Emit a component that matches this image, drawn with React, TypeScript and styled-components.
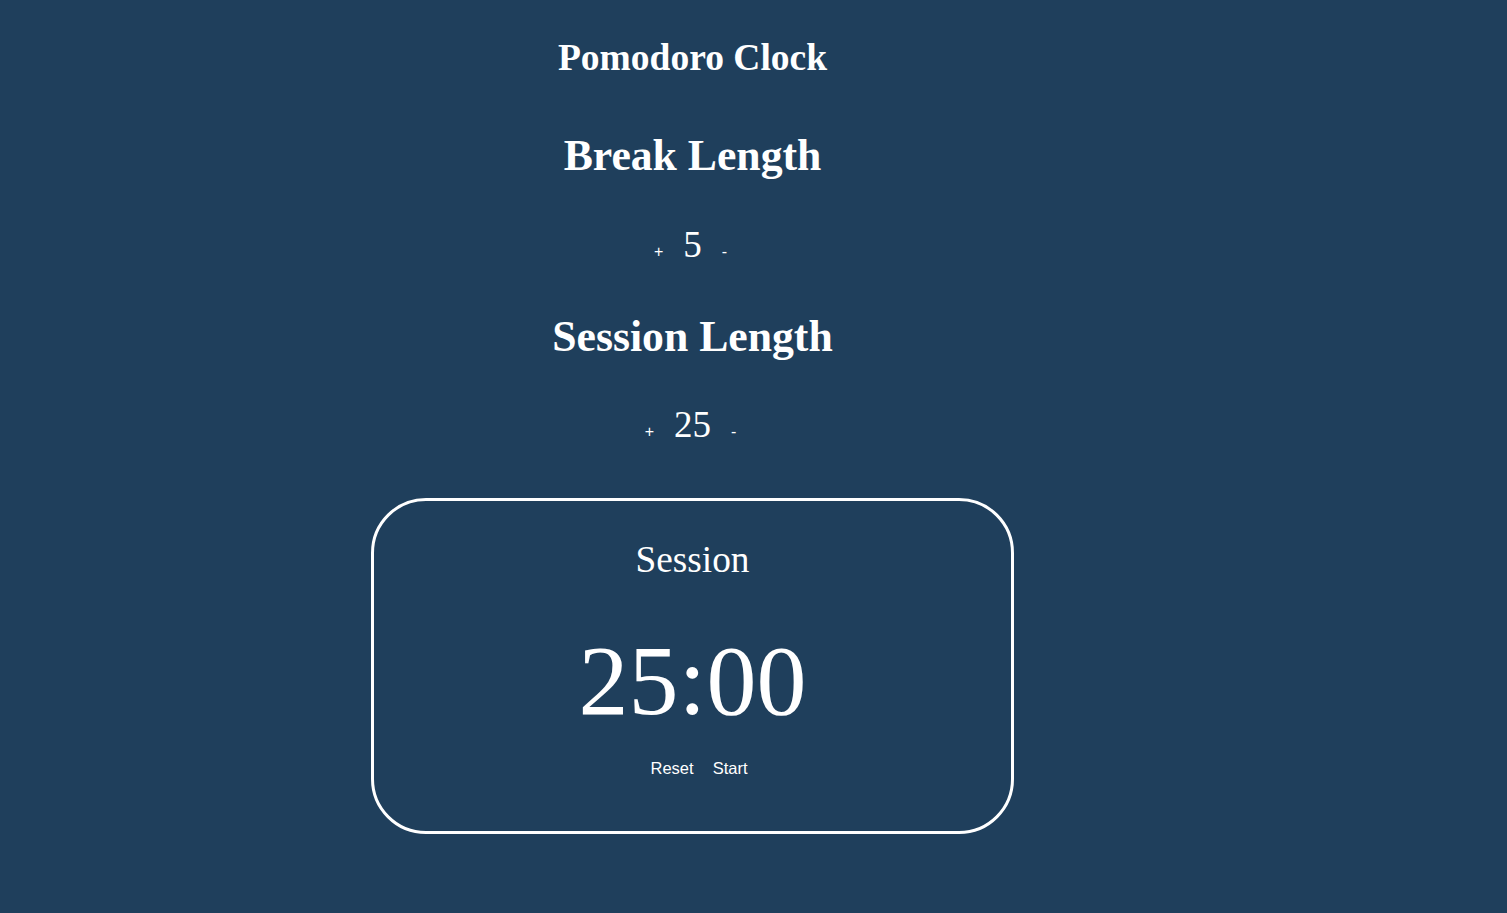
import React, { useState } from "react";
import styled, { createGlobalStyle } from "styled-components";

const GlobalStyle = createGlobalStyle`
  html, body {
    margin: 0;
    padding: 0;
    background-color: #1f3f5c;
    min-height: 100%;
  }
  body {
    font-family: "Liberation Serif", "Times New Roman", serif;
    color: white;
    min-height: 913px;
  }
`;

const Page = styled.div`
  display: grid;
  grid-template-columns: 371px 643px 1fr;
  padding-top: 39px;
`;

const Column = styled.main`
  grid-column: 2;
  display: flex;
  flex-direction: column;
  align-items: center;
`;

const Title = styled.h1`
  margin: 0;
  font-size: 37.5px;
  line-height: 1;
  font-weight: 700;
`;

const Label = styled.h2<{ $gap: number }>`
  margin: ${(p) => p.$gap}px 0 0;
  font-size: 43.7px;
  line-height: 1;
  font-weight: 700;
`;

// number stays centred, the wider "+" pushes it right, so pad the right side
const Counter = styled.div<{ $gap: number }>`
  margin-top: ${(p) => p.$gap}px;
  padding-right: 4px;
  display: flex;
  align-items: baseline;
  justify-content: center;
  gap: 20px;
`;

const Value = styled.span`
  font-size: 37px;
  line-height: 1;
`;

const TinyButton = styled.button`
  background: none;
  border: none;
  padding: 0;
  color: white;
  font-family: "Liberation Sans", Arial, sans-serif;
  font-size: 16px;
  line-height: 1;
  cursor: pointer;
`;

const ClockBox = styled.section`
  margin-top: 55px;
  width: 100%;
  box-sizing: border-box;
  border: 3px solid white;
  border-radius: 55px;
  padding: 40px 0 54px;
  display: flex;
  flex-direction: column;
  align-items: center;
`;

const Mode = styled.div`
  font-size: 37.3px;
  line-height: 1;
`;

const Time = styled.div`
  margin-top: 53px;
  font-size: 100px;
  line-height: 1;
`;

const Controls = styled.div`
  margin-top: 29px;
  padding-left: 13px;
  display: flex;
  gap: 19px;
`;

const ControlButton = styled.button`
  background: none;
  border: none;
  padding: 0;
  color: white;
  font-family: "Liberation Sans", Arial, sans-serif;
  font-size: 16.5px;
  line-height: 1;
  cursor: pointer;
`;

export default function App() {
  const [breakLen, setBreakLen] = useState(5);
  const [sessionLen, setSessionLen] = useState(25);

  return (
    <>
      <GlobalStyle />
      <Page>
        <Column>
          <Title>Pomodoro Clock</Title>

          <Label $gap={57}>Break Length</Label>
          <Counter $gap={49}>
            <TinyButton onClick={() => setBreakLen(breakLen + 1)}>+</TinyButton>
            <Value>{breakLen}</Value>
            <TinyButton onClick={() => setBreakLen(Math.max(1, breakLen - 1))}>-</TinyButton>
          </Counter>

          <Label $gap={52}>Session Length</Label>
          <Counter $gap={47}>
            <TinyButton onClick={() => setSessionLen(sessionLen + 1)}>+</TinyButton>
            <Value>{sessionLen}</Value>
            <TinyButton onClick={() => setSessionLen(Math.max(1, sessionLen - 1))}>-</TinyButton>
          </Counter>

          <ClockBox>
            <Mode>Session</Mode>
            <Time>{String(sessionLen).padStart(2, "0")}:00</Time>
            <Controls>
              <ControlButton>Reset</ControlButton>
              <ControlButton>Start</ControlButton>
            </Controls>
          </ClockBox>
        </Column>
      </Page>
    </>
  );
}
